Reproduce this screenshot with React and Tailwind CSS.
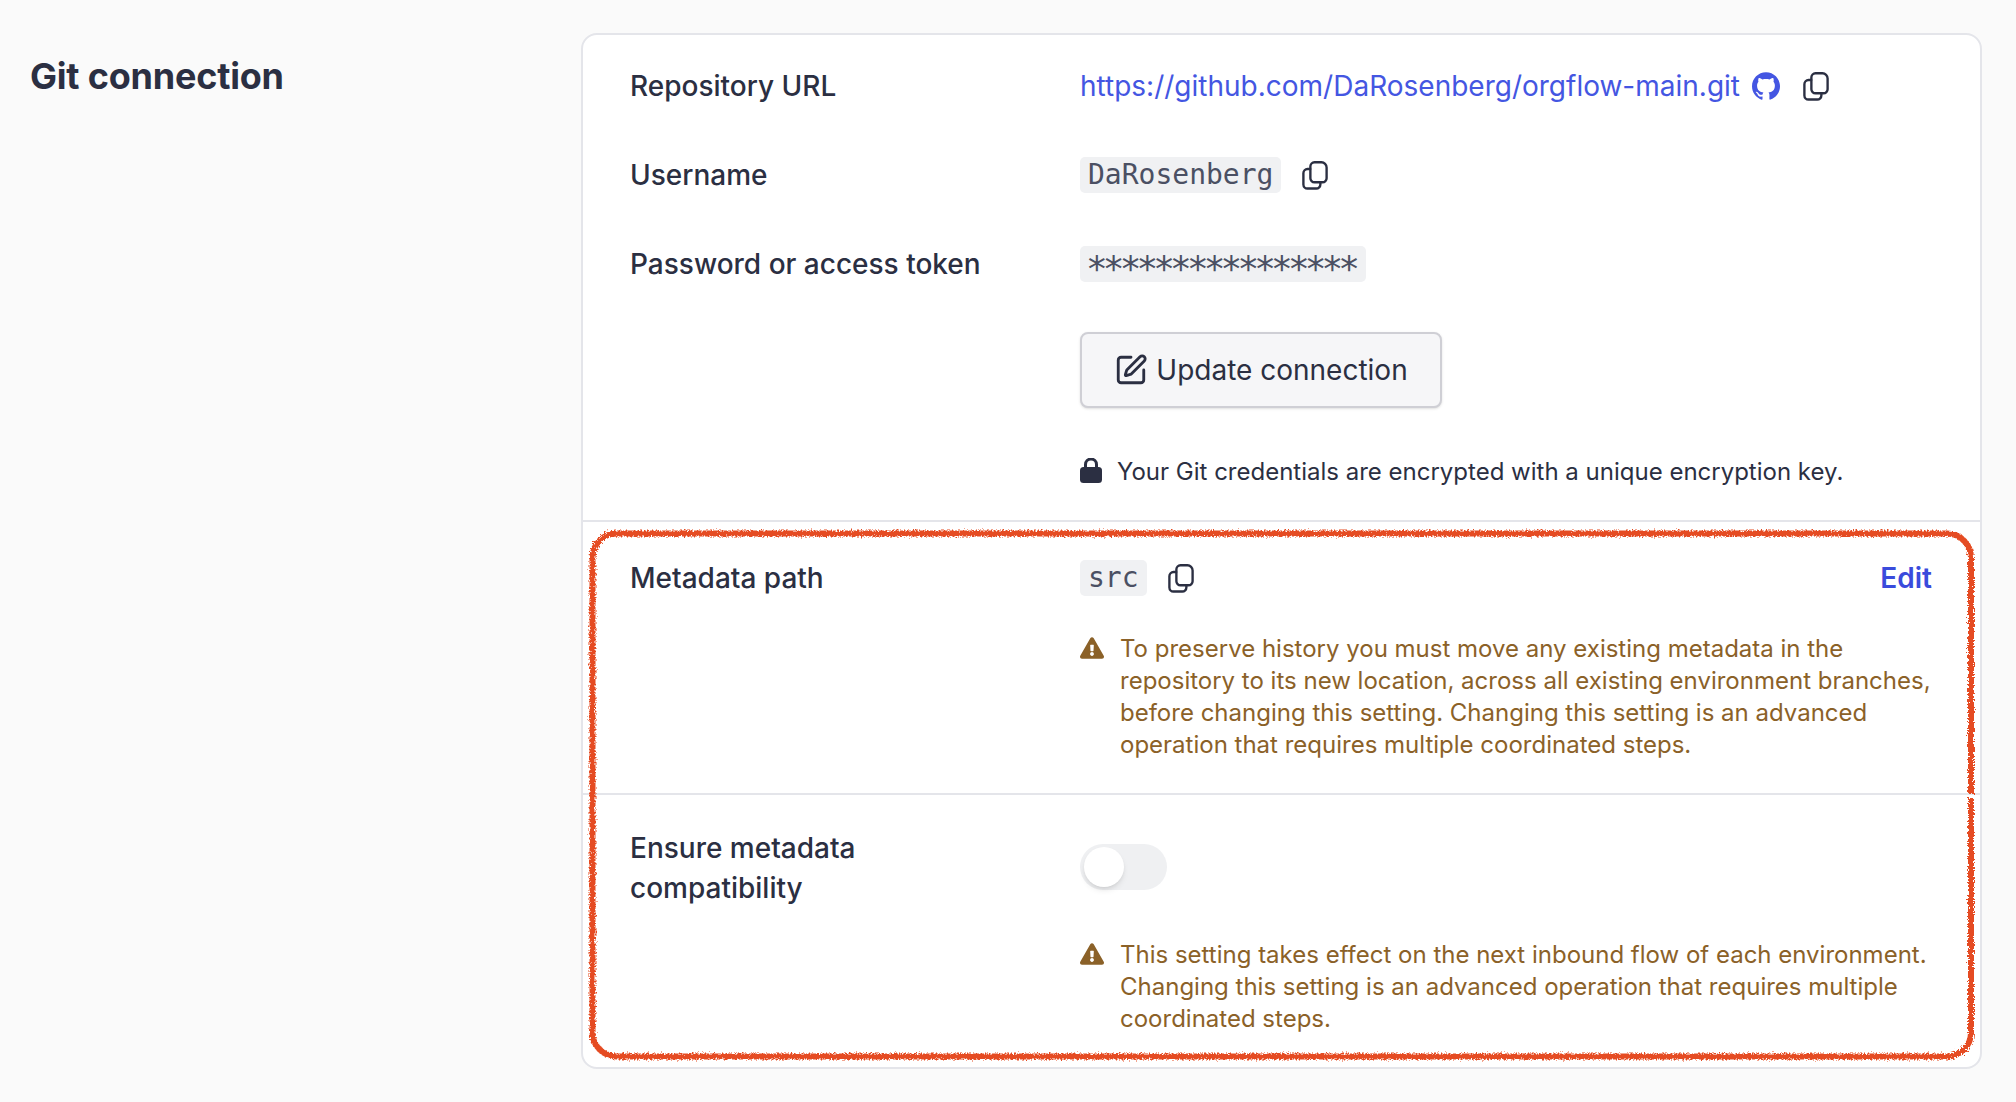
import React from "react";
import { FaExclamationTriangle } from "react-icons/fa";
import { SiGithub } from "react-icons/si";
import { SquarePen } from "lucide-react";

function CopyIcon({ className }) {
  return (
    <svg viewBox="0 0 24 27" className={className} fill="none" stroke="currentColor" strokeWidth="2.2" strokeLinecap="round" strokeLinejoin="round">
      <path d="M11.5 1.2h6.500a4.800 4.800 0 0 1 4.800 4.800v10a3.800 3.800 0 0 1-3.800 3.800h-7.500a3.800 3.800 0 0 1-3.800-3.800V5a3.800 3.800 0 0 1 3.800-3.800z" />
      <path d="M7.500 7.500H5A3.800 3.800 0 0 0 1.200 11.300v10.500A3.800 3.800 0 0 0 5 25.600h8.200a3.800 3.800 0 0 0 3.800-3.800v-1.800" />
    </svg>
  );
}

function LockIcon({ className }) {
  return (
    <svg viewBox="0 0 22 25" className={className}>
      <rect x="0" y="9" width="22" height="16" rx="3.500" fill="currentColor" />
      <path d="M5.500 11V6.500a5.500 5.500 0 0 1 11 0V11" fill="none" stroke="currentColor" strokeWidth="3" />
    </svg>
  );
}

function Chip({ children }) {
  return (
    <code className="inline-block h-9 rounded-[5px] bg-[#f0f1f3] px-2 font-['DejaVu_Sans_Mono',monospace] text-[28px] leading-9 text-[#4b5063]">
      {children}
    </code>
  );
}

function Row({ label, children }) {
  return (
    <div className="flex h-10 items-center">
      <div className="w-[450px] shrink-0 font-medium">{label}</div>
      <div className="flex items-center">{children}</div>
    </div>
  );
}

function Warn({ children }) {
  return (
    <div className="flex text-[24px] leading-8 text-[#8b6128]">
      <FaExclamationTriangle className="mt-[3px] h-[24px] w-[24px] shrink-0" />
      <p className="ml-4">{children}</p>
    </div>
  );
}

export default function App() {
  return (
    <div className="relative flex h-[1102px] bg-[#fafafa] font-['Inter',sans-serif] text-[28px] leading-10 text-[#2b2f42]">
      <div className="w-[581px] shrink-0 pl-[30px] pt-[52px]">
        <h2 className="text-[36px] font-bold leading-12 tracking-[-0.2px]">Git connection</h2>
      </div>
      <div className="mt-[33px] h-[1036px] w-[1401px] rounded-2xl border-2 border-[#e4e5ea] bg-white">
        <section className="border-b-2 border-[#e4e5ea] pb-[32px] pl-[47px] pr-[47px] pt-[31px]">
          <div className="flex flex-col gap-[49px]">
            <Row label="Repository URL">
              <a className="text-[#4456e2]">https://github.com/DaRosenberg/orgflow-main.git</a>
              <SiGithub className="ml-3 h-[28px] w-[28px] text-[#4456e2]" />
              <CopyIcon className="ml-[23px] h-[29px] w-[26px] text-[#2b2f42]" />
            </Row>
            <Row label="Username">
              <Chip>DaRosenberg</Chip>
              <CopyIcon className="ml-[21px] h-[29px] w-[26px] text-[#2b2f42]" />
            </Row>
            <Row label="Password or access token">
              <code className="inline-block h-9 w-[286px] whitespace-nowrap rounded-[5px] bg-[#f0f1f3] pl-[6px] pt-[10px] font-['DejaVu_Sans_Mono',monospace] text-[36px] leading-[26px] tracking-[-4.85px] text-[#4b5063]">
                ****************
              </code>
            </Row>
          </div>
          <div className="ml-[450px] mt-12">
            <button className="flex h-[76px] w-[362px] items-center justify-center gap-2 rounded-lg border-2 border-[#cfcfd5] bg-[#f6f6f8] shadow-sm">
              <SquarePen className="h-[34px] w-[34px]" strokeWidth={2} />
              <span>Update connection</span>
            </button>
            <div className="mt-12 flex items-center text-[24px] leading-8">
              <LockIcon className="mb-[4px] h-[25px] w-[22px] shrink-0" />
              <span className="ml-[15px]">Your Git credentials are encrypted with a unique encryption key.</span>
            </div>
          </div>
        </section>
        <section className="border-b-2 border-[#e4e5ea] pb-[32px] pl-[47px] pr-[48px] pt-[38px]">
          <div className="flex h-9 items-center">
            <div className="w-[450px] shrink-0 font-medium">Metadata path</div>
            <Chip>src</Chip>
            <CopyIcon className="ml-[21px] h-[29px] w-[26px] text-[#2b2f42]" />
            <a className="ml-auto font-semibold text-[#3a4bdc]">Edit</a>
          </div>
          <div className="ml-[450px] mt-[37px]">
            <Warn>
              To preserve history you must move any existing metadata in the repository to its new location, across all existing environment branches, before changing this setting. Changing this setting is an advanced operation that requires multiple coordinated steps.
            </Warn>
          </div>
        </section>
        <section className="pl-[47px] pr-[47px] pt-[33px]">
          <div className="flex items-center">
            <div className="w-[450px] shrink-0 pr-[150px] font-medium">Ensure metadata compatibility</div>
            <div className="mb-[2px] flex h-[46px] w-[87px] items-center rounded-full bg-[#eff0f2] pl-[4px]">
              <div className="h-10 w-10 rounded-full bg-white shadow-md" />
            </div>
          </div>
          <div className="ml-[450px] mt-[31px]">
            <Warn>
              This setting takes effect on the next inbound flow of each environment. Changing this setting is an advanced operation that requires multiple coordinated steps.
            </Warn>
          </div>
        </section>
      </div>
      <svg className="pointer-events-none absolute left-[586px] top-[526px]" width="1392" height="538" fill="none">
        <defs>
          <filter id="rough" x="-2%" y="-2%" width="104%" height="104%">
            <feTurbulence type="fractalNoise" baseFrequency="0.6" numOctaves="2" seed="4" />
            <feDisplacementMap in="SourceGraphic" scale="6" />
          </filter>
        </defs>
        <path
          d="M30.500 7.500H1361a24 24 0 0 1 24 24V268M1385 272V506.500a24 24 0 0 1-24 24H30.500a24 24 0 0 1-24-24V31.500a24 24 0 0 1 24-24"
          stroke="#e54b22"
          strokeWidth="6"
          filter="url(#rough)"
        />
      </svg>
    </div>
  );
}
